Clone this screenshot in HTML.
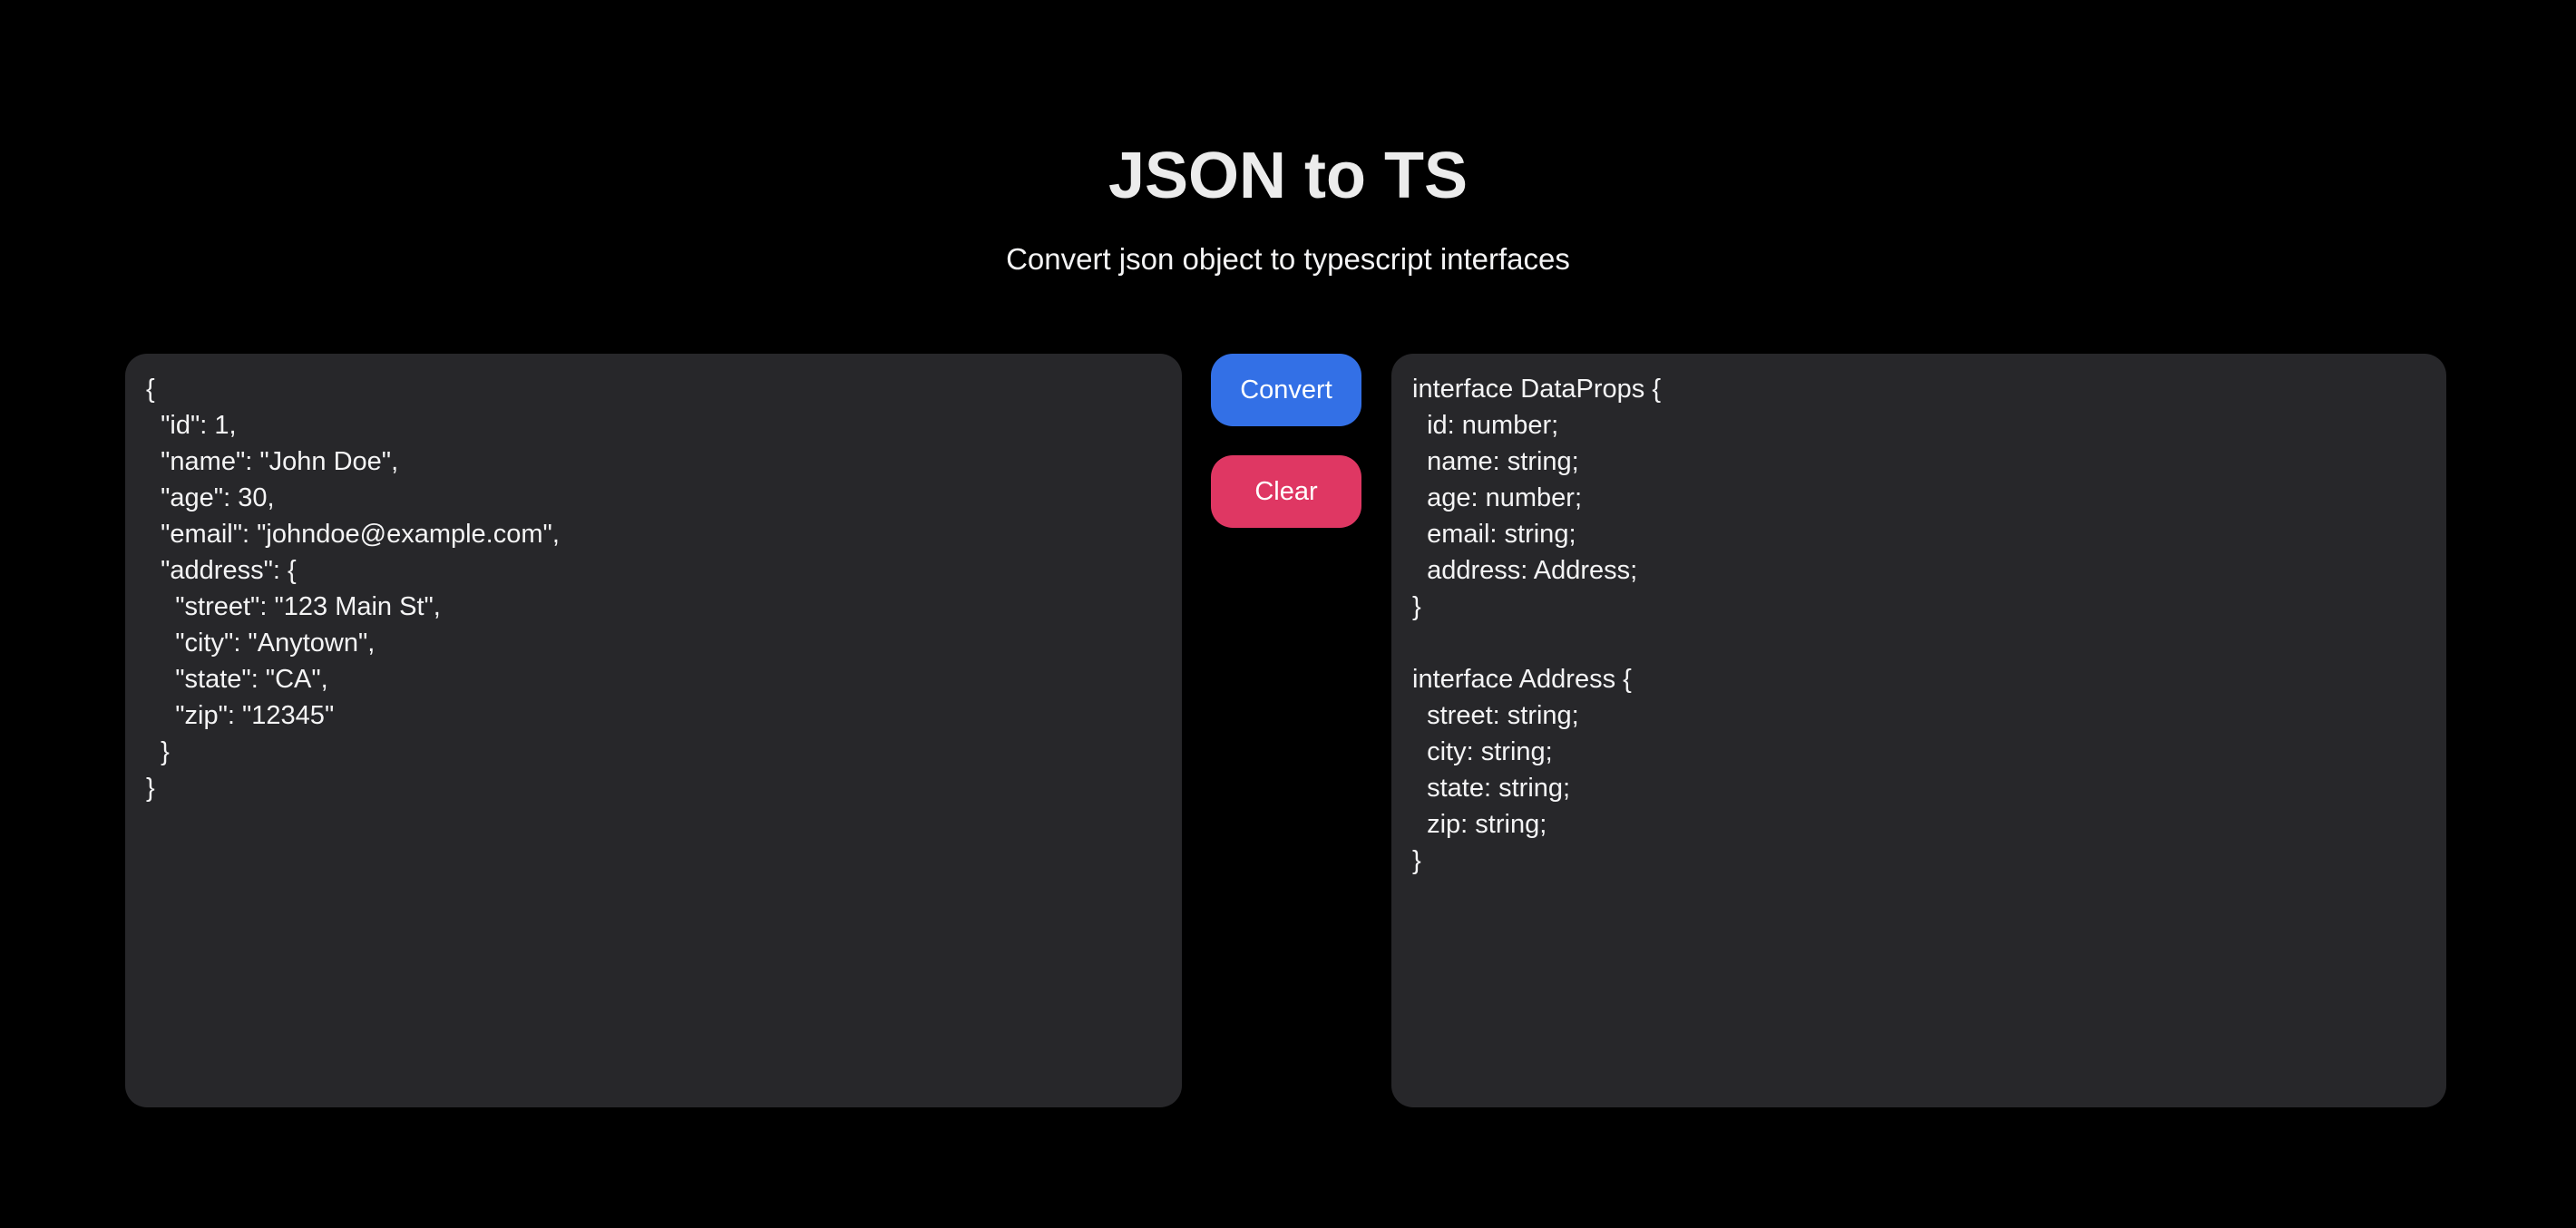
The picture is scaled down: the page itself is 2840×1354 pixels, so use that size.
<!DOCTYPE html>
<html><head><meta charset="utf-8"><style>
html,body{margin:0;padding:0;background:#000;width:2840px;height:1354px;overflow:hidden;font-family:"Liberation Sans",sans-serif;color:#f4f4f5}
h1{position:absolute;left:0;width:2840px;top:149px;margin:0;text-align:center;font-size:72px;font-weight:bold;line-height:90px;color:#ececec}
.sub{position:absolute;left:0;width:2840px;top:266px;text-align:center;font-size:33px;line-height:40px}
.panel{position:absolute;top:390px;height:831px;background:#27272a;border-radius:24px;box-sizing:border-box;padding:19px 23px;font-size:29px;line-height:40px;white-space:pre}
.btn{position:absolute;left:1335px;width:166px;height:80px;border-radius:24px;text-align:center;line-height:80px;font-size:29px;color:#fff}
</style></head><body>
<h1>JSON to TS</h1>
<div class="sub">Convert json object to typescript interfaces</div>
<div class="panel" style="left:138px;width:1165px">{
  "id": 1,
  "name": "John Doe",
  "age": 30,
  "email": "johndoe@example.com",
  "address": {
    "street": "123 Main St",
    "city": "Anytown",
    "state": "CA",
    "zip": "12345"
  }
}</div>
<div class="btn" style="top:390px;background:#3370e6">Convert</div>
<div class="btn" style="top:502px;background:#df3763">Clear</div>
<div class="panel" style="left:1534px;width:1163px">interface DataProps {
  id: number;
  name: string;
  age: number;
  email: string;
  address: Address;
}

interface Address {
  street: string;
  city: string;
  state: string;
  zip: string;
}</div>
</body></html>
